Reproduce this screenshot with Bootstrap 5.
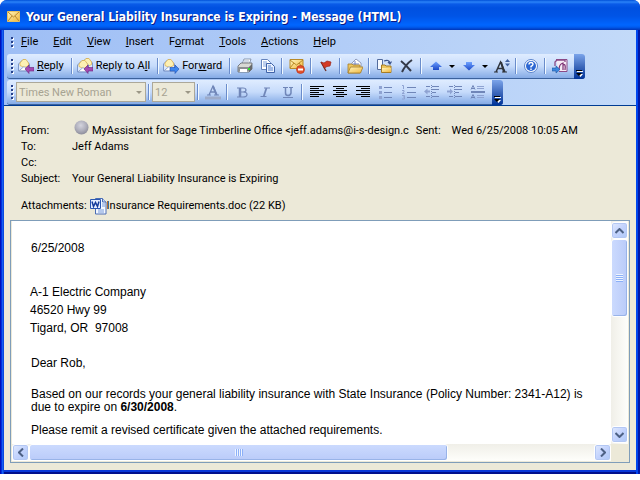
<!DOCTYPE html>
<html lang="en">
<head>
<meta charset="utf-8">
<meta name="viewport" content="width=device-width, initial-scale=1">
<title>Your General Liability Insurance is Expiring - Message (HTML)</title>
<link href="https://cdn.jsdelivr.net/npm/bootstrap@5.3.0/dist/css/bootstrap.min.css" rel="stylesheet">
<style>
  :root { --ui: Roboto, "Noto Sans", sans-serif; }
  body { font-family: var(--ui); font-size: 11px; line-height: 16px; color: #000; background: #fff; }
  button { font: inherit; color: inherit; background: none; border: 0; padding: 0; }
  .win { min-height: calc(100vh - 6px); border-radius: 7px 7px 0 0; overflow: hidden; padding: 0 4px 4px;
    background: linear-gradient(90deg, #0011b8 0 1px, #0030e0 1px 2px, #1660f0 2px 3px, #0a48e0 3px 4px, transparent 4px calc(100% - 4px), #0046ee calc(100% - 4px) calc(100% - 2px), #0018a8 calc(100% - 2px)),
    linear-gradient(0deg, #000f8c 0 2px, #0838d8 2px 4px, #0a48e0 4px); }
  .titlebar { height: 30px; margin: 0 -4px; padding: 3px 7px 0; gap: 6px; color: #fff;
    background: linear-gradient(#0050d8 0, #2b83f8 2px, #0a5be8 4px, #0050e0 8px, #0054e6 16px, #0066ff 25px, #005cf0 27px, #0036b8 30px); }
  .titlebar h1 { font: bold 12px/18px "DejaVu Sans Condensed", "Noto Sans", sans-serif; text-shadow: 1px 1px 0 #0a1883; }
  .bars { background: linear-gradient(90deg, #9ebef5, #c3daf9); border-bottom: 1px solid #003c93; }
  .menubar { height: 24px; padding-left: 3px; }
  .menubar button { line-height: 16px; margin-right: 15px; }
  .grip { width: 9px; height: 15px; flex: none; background: repeating-linear-gradient(#27418b 0 2px, transparent 2px 4px) 4px 0 / 2px 14px no-repeat, repeating-linear-gradient(#fff 0 2px, transparent 2px 4px) 5px 1px / 2px 14px no-repeat; }
  .menubar .grip { height: 11px; margin-right: 5px; background-size: 2px 10px; }
  .tool { height: 25px; margin-left: 3px; border-radius: 3px; border-bottom: 1px solid #3b619c;
    background: linear-gradient(#dfecff, #c6dbfb 50%, #85abe6); width: max-content; }
  .tool + .tool { margin-top: 1px; }
  .tool button { width: 23px; height: 22px; flex: none; display: flex; align-items: center; justify-content: center; }
  .tool button svg { width: 16px; height: 16px; flex: none; }
  .tool .lbl { width: auto; gap: 3px; padding: 0 5px 0 2px; }
  .tool .drop { width: 10px; }
  .tool .more { width: 11px; height: 25px; margin-left: 3px; margin-bottom: -1px; border-radius: 0 3px 3px 0; background: linear-gradient(#7ba4ea, #3d68bb 50%, #003399); align-items: flex-end; padding-bottom: 2px; }
  .tool .more svg { width: 7px; height: 8px; }
  .sep { width: 6px; height: 16px; flex: none; background: linear-gradient(90deg, transparent 2px, #6a8ccb 2px 3px, #f1f9ff 3px 4px, transparent 4px); }
  .tool select { appearance: none; height: 20px; font: 11px var(--ui); color: #a7a392; opacity: 1; border: 1px solid #aca899; padding: 0 2px; border-radius: 0;
    background: #ece9d8; }
  .pick { position: relative; display: flex; }
  .pick::after { content: ""; position: absolute; right: 4px; top: 9px; border: 3px solid transparent; border-top-color: #9b9786; pointer-events: none; }
  .face { width: 130px; } .size { width: 43px; }
  .off { color: #7086b8; }
  .pane { background: #ece9d8; padding: 17px 6px 7px; }
  .heads { padding: 0 11px; }
  .heads dl { display: grid; grid-template-columns: 51px 1fr; }
  .heads dt { font-weight: 400; } .heads dd { margin: 0; white-space: nowrap; }
  .who { gap: 3px; }
  .who svg { margin: -3px 0 0 2px; }
  .when { margin-left: 4px; } .when b { font-weight: 400; margin-right: 11px; }
  .attach { height: 20px; margin-top: 9px; margin-bottom: 4px; gap: 3px; }
  .attach a { color: #000; text-decoration: none; }
  .frame { border: 1px solid #7f9db9; background: #ece9d8; display: grid; grid-template: 1fr 17px / 1fr 17px; padding: 0 1px 1px; }
  .letter { background: #fff; padding: 18px 10px 4px 19px; font: 12px/18px "Liberation Sans", Arial, sans-serif; overflow: hidden; }
  .letter p { margin: 0; }
  .letter .street { margin: 26px 0 17px -1px; }
  .letter .gist { margin: 16px 0 7px; line-height: 13px; }
  .vbar { background: linear-gradient(90deg, #f0efe8, #fefefb); padding: 1px 0; }
  .hbar { background: linear-gradient(#f0efe8, #fefefb); }
  .arrow, .thumb { border: 1px solid #fff !important; border-radius: 3px; background: linear-gradient(135deg, #e1eafe, #c3d3fd 50%, #aec8f7) !important; box-shadow: inset 0 0 0 1px #b3c7f3; display: flex; align-items: center; justify-content: center; color: #4d6185; }
  .arrow { width: 17px; height: 17px; flex: none; }
  .vbar .thumb { height: 78px; background: linear-gradient(90deg, #cbdafe, #bacbf9) !important; box-shadow: inset -1px -1px 0 #98b3e8; }
  .hbar .thumb { width: 70%; background: linear-gradient(#cbdafe, #bacbf9) !important; box-shadow: inset -1px -1px 0 #98b3e8; }
  .ridge { width: 7px; height: 8px; background: repeating-linear-gradient(#eef4fe 0 1px, #8cb0f8 1px 2px); }
  .hbar .ridge { width: 8px; height: 7px; background: repeating-linear-gradient(90deg, #eef4fe 0 1px, #8cb0f8 1px 2px); }
</style>
</head>
<body>
<svg class="position-absolute" width="0" height="0" aria-hidden="true">
  <defs>
    <linearGradient id="gold" x1="0" y1="0" x2="1" y2="1"><stop offset="0" stop-color="#fff6c0"/><stop offset="1" stop-color="#f0b53a"/></linearGradient>
    <linearGradient id="blu" x1="0" y1="0" x2="0" y2="1"><stop offset="0" stop-color="#6fa2ff"/><stop offset="1" stop-color="#1b48c8"/></linearGradient>
    <radialGradient id="orb" cx=".45" cy=".35" r=".65"><stop offset="0" stop-color="#d4d4de"/><stop offset=".6" stop-color="#aeaebb"/><stop offset="1" stop-color="#8d8d9b"/></radialGradient>
  </defs>
  <symbol id="env" viewBox="0 0 16 16"><path d="M.5 6 5 1.500h2L11.500 6v7H.5z" fill="#dce8fb" stroke="#7d98cb"/><path d="M2 5 5 1.500h3L10.500 5v2.500L6.500 9.500 2 7.500z" fill="#fdf0b4" stroke="#e0b040" stroke-width=".7"/><path d="M1 12.800 6 8.500 11 12.800z" fill="#fff" stroke="#7d98cb" stroke-width=".8"/></symbol>
</svg>
<main class="win d-flex flex-column">
  <header class="titlebar d-flex align-items-center">
    <svg width="13" height="11" viewBox="0 0 13 11"><path d="M.5.5h12v10H.5z" fill="url(#gold)" stroke="#e8c060"/><path d="M1 1l5.500 5L12 1M1 10l4-5M12 10 8 5" fill="none" stroke="#b98730"/></svg>
    <h1 class="m-0">Your General Liability Insurance is Expiring - Message (HTML)</h1>
  </header>
  <div class="bars">
    <nav class="menubar d-flex align-items-center" aria-label="Menu">
      <span class="grip"></span>
      <button><u>F</u>ile</button><button><u>E</u>dit</button><button><u>V</u>iew</button><button><u>I</u>nsert</button><button>F<u>o</u>rmat</button><button><u>T</u>ools</button><button><u>A</u>ctions</button><button><u>H</u>elp</button>
    </nav>
    <div class="tool d-flex align-items-center" role="toolbar" aria-label="Standard">
      <span class="grip"></span>
      <button class="lbl"><svg><use href="#env" width="16" height="16"/><path d="m7 11 4-4v2.500h5v3.500h-5v2.500z" fill="#a44ab0" stroke="#6d2480" stroke-width=".6"/></svg><span><u>R</u>eply</span></button><span class="sep"></span>
      <button class="lbl"><svg><use href="#env" x="4" y="-1" width="16" height="16"/><use href="#env" x="0" y="1" width="16" height="16"/><path d="m7 11 4-4v2.500h5v3.500h-5v2.500z" fill="#a44ab0" stroke="#6d2480" stroke-width=".6"/></svg><span>Reply to A<u>l</u>l</span></button><span class="sep"></span>
      <button class="lbl"><svg><use href="#env" width="16" height="16"/><path d="m16 11-4-4v2.500H7v3.500h5v2.500z" fill="#3d86ee" stroke="#1c4cae" stroke-width=".6"/></svg><span>For<u>w</u>ard</span></button><span class="sep"></span>
      <button aria-label="Print"><svg viewBox="0 0 16 16"><path d="M5 6 7 1h7l-2 6z" fill="#fff" stroke="#7585a0" stroke-width=".8"/><path d="M7 3h5M6.500 5h5" stroke="#8fa2bf" stroke-width=".8"/><path d="m1 8 3-3h11v6l-3 3H1z" fill="#d9d9d5" stroke="#626568" stroke-width=".8"/><path d="M1 9h11v4H1z" fill="#8c8f91"/><path d="M3 11h7v3H3z" fill="#fff"/><path d="m12 9 3-3v5l-3 3z" fill="#66696b"/><path d="M11 10h2v2h-2z" fill="#2fe02a"/></svg></button>
      <button aria-label="Copy"><svg viewBox="0 0 16 16"><path d="M1.500 1.500h6l3 3v7h-9z" fill="#fff" stroke="#6583bd"/><path d="M3 4h4M3 6h4M3 8h4" stroke="#7ea0dd"/><path d="M6.500 5.500h5l3 3v6h-8z" fill="#e9f1ff" stroke="#3f62a8"/><path d="M8 8h3M8 10h5M8 12h5" stroke="#5680cc"/></svg></button><span class="sep"></span>
      <button aria-label="Junk"><svg viewBox="0 0 16 16"><path d="M1 1.500h13v9H1z" fill="url(#gold)" stroke="#b98a28"/><path d="m1 2 6.500 5L14 2M1 10l4-5M14 10l-4-5" fill="none" stroke="#b98a28"/><circle cx="11.500" cy="11.500" r="4" fill="#e4512b" stroke="#b8321c" stroke-width=".7"/><path d="M9 10.500h5v2H9z" fill="#fff"/></svg></button><span class="sep"></span>
      <button aria-label="Flag"><svg viewBox="0 0 16 16"><path d="M3 4 8 13" stroke="#6c2b22" stroke-width="1.400"/><path d="m3 4 3 1 3-2 4 1-1 4-3 .5L6.500 10z" fill="#d43a25" stroke="#9a2418" stroke-width=".7"/></svg></button><span class="sep"></span>
      <button aria-label="Open"><svg viewBox="0 0 16 16"><path d="m5 5 4-4 5 4v5H5z" fill="#fff" stroke="#7a86a8" stroke-width=".8"/><path d="M8 3v4m-2-1h6" stroke="#7184c4"/><path d="M1 6h4l1 1h7v8H1z" fill="#edc760" stroke="#a57c26" stroke-width=".8"/><path d="M3.500 9H16l-2.500 6H1z" fill="url(#gold)" stroke="#a57c26" stroke-width=".8"/></svg></button><span class="sep"></span>
      <button aria-label="Move to folder"><svg viewBox="0 0 16 16"><path d="M1.500 1.500h5v10h-5z" fill="#f5f9ff" stroke="#526b9d"/><path d="M8 3q5-2 6 2m-2-1 2 2 1.500-2.500" fill="none" stroke="#3c558e" stroke-width="1.200"/><path d="M5.500 7H9l1 1h5v6.500H5.500z" fill="#edc760" stroke="#a57c26"/><path d="M6 10h9v4H6z" fill="url(#gold)"/></svg></button>
      <button aria-label="Delete"><svg viewBox="0 0 16 16"><path d="M2 3q5 4 10 10M13 2Q7 6 3 14" fill="none" stroke="#343a49" stroke-width="2"/></svg></button><span class="sep"></span>
      <button aria-label="Previous item"><svg viewBox="0 0 16 16"><path d="m8 3.500 6 5.500h-3v3H5V9H2z" fill="url(#blu)"/></svg></button><button class="drop" aria-label="Previous list"><svg viewBox="0 0 16 16"><path d="M5 7h6l-3 3z"/></svg></button>
      <button aria-label="Next item"><svg viewBox="0 0 16 16"><path d="m8 12.500 6-5.500h-3V4H5v3H2z" fill="url(#blu)"/></svg></button><button class="drop" aria-label="Next list"><svg viewBox="0 0 16 16"><path d="M5 7h6l-3 3z"/></svg></button>
      <button aria-label="Font size"><svg viewBox="0 0 16 16"><path d="M2 14 6.500 4 11 14M4 10.500h5" fill="none" stroke="#30343b" stroke-width="1.500"/><path d="m7 4 3 10" stroke="#30343b" stroke-width="2"/><path d="M0 14h4M8 14h5" stroke="#30343b"/><path d="m11 4 2.500-3L16 4zM11 5.500h5L13.500 8.500z" fill="#41619f"/></svg></button><span class="sep"></span>
      <button aria-label="Help"><svg viewBox="0 0 16 16"><circle cx="8" cy="8" r="6.500" fill="#fff" stroke="#5a83cc"/><circle cx="8" cy="8" r="5" fill="#2d67d2"/><path d="M6 6.500Q6 4.500 8 4.500t2 1.800Q10 7.500 8 8.500V9.500M8 10.500V12" fill="none" stroke="#fff" stroke-width="1.400"/></svg></button><span class="sep"></span>
      <button aria-label="Send to OneNote"><svg viewBox="0 0 16 16"><path d="M4 1.500h11v12H7" fill="#f6ebf5" stroke="#8a4a86"/><path d="M3 8V4l2-2h8v2" fill="none" stroke="#8a4a86" stroke-width="1.300"/><path d="M7 12q0-6 4-7v7m0-5q3-2 2 5" fill="none" stroke="#7b2f72" stroke-width="1.200"/><path d="M0 10h4V8l4 3.500L4 15v-2H0z" fill="#3d86de" stroke="#1d559f" stroke-width=".6"/></svg></button>
      <button class="more" aria-label="Toolbar options"><svg viewBox="0 0 7 8"><path d="M1 2h6v1H1zM2 5h5L4.500 8z" fill="#fff"/><path d="M0 1h6v1H0zM0 4h6L3 7z"/></svg></button>
    </div>
    <div class="tool d-flex align-items-center" role="toolbar" aria-label="Formatting">
      <span class="grip"></span>
      <span class="pick"><select class="face" disabled aria-label="Font"><option>Times New Roman</option></select></span><span class="sep"></span>
      <span class="pick"><select class="size" disabled aria-label="Size"><option>12</option></select></span><span class="sep"></span>
      <button class="off" aria-label="Font color"><svg viewBox="0 0 16 16"><path d="M4 11 8 2l4 9M5 8h5" fill="none" stroke="currentColor" stroke-width="1.300"/><path d="m8 2 3.500 9" stroke="currentColor" stroke-width="2"/><path d="M2 11h4M9 11h5" stroke="currentColor"/><path d="M0 12.500h16v3H0z" fill="#9dabc9"/></svg></button><span class="sep"></span>
      <button class="off" aria-label="Bold"><svg viewBox="0 0 16 16"><path d="M3 4h6q3 0 3 2t-3 2q4 0 4 2.500T9 13H3M9 8H6" fill="none" stroke="currentColor" stroke-width="1.200"/><path d="M6 4v9" stroke="currentColor" stroke-width="2.500"/></svg></button>
      <button class="off" aria-label="Italic"><svg viewBox="0 0 16 16"><path d="m9.500 4-3 9" stroke="currentColor" stroke-width="1.800"/><path d="M7 4h6M3.500 12.500h6" stroke="currentColor"/></svg></button>
      <button class="off" aria-label="Underline"><svg viewBox="0 0 16 16"><path d="M5.500 4v5q0 2.500 2.500 2.500T11 9V4" fill="none" stroke="currentColor" stroke-width="1.500"/><path d="M3 3.500h5M9 3.500h4M3 13.500h10" stroke="currentColor"/></svg></button><span class="sep"></span>
      <button aria-label="Align left"><svg viewBox="0 0 16 16"><path d="M1 2.500h14M1 4.500h9M1 6.500h14M1 8.500h9M1 10.500h14M1 12.500h9" stroke="#000"/></svg></button>
      <button aria-label="Center"><svg viewBox="0 0 16 16"><path d="M1 2.500h14M4 4.500h8M1 6.500h14M4 8.500h8M1 10.500h14M4 12.500h8" stroke="#000"/></svg></button>
      <button aria-label="Align right"><svg viewBox="0 0 16 16"><path d="M1 2.500h14M6 4.500h9M1 6.500h14M6 8.500h9M1 10.500h14M6 12.500h9" stroke="#000"/></svg></button>
      <button class="off" aria-label="Bullets"><svg viewBox="0 0 16 16"><path d="M6 3.500h8M6 8.500h8M6 13.500h8" stroke="currentColor"/><path d="M1 2h3v3H1zM1 7h3v3H1zM1 12h3v3H1z" fill="#8fa3d2"/></svg></button>
      <button class="off" aria-label="Numbering"><svg viewBox="0 0 16 16"><path d="M6 3.500h9M6 8.500h9M6 13.500h9" stroke="currentColor"/><path d="M1 1.500h1.500V5M1 6.500h2v1.500L1 9.500h2.500M1 11.500h2.500v3.500H1m1-2h1" fill="none" stroke="#8fa3d2"/></svg></button>
      <button class="off" aria-label="Decrease indent"><svg viewBox="0 0 16 16"><path d="M2 2.500h4m2 0h7M8 5.500h7M8 8.500h4M2 12.500h4m2 0h7" stroke="currentColor" stroke-width="1.200"/><path d="M7.500 1v14" stroke="currentColor" stroke-dasharray="1 1"/><path d="m0 7.500 3.500-3v2H6v2H3.500v2z" fill="#8fa3d2"/></svg></button>
      <button class="off" aria-label="Increase indent"><svg viewBox="0 0 16 16"><path d="M2 2.500h4m2 0h7M8 5.500h7M8 8.500h4M2 12.500h4m2 0h7" stroke="currentColor" stroke-width="1.200"/><path d="M7.500 1v14" stroke="currentColor" stroke-dasharray="1 1"/><path d="M6 7.500 3 4.500v2H0v2h3v2z" fill="#8fa3d2"/></svg></button>
      <button class="off" aria-label="Horizontal line"><svg viewBox="0 0 16 16"><path d="M7 2.500h7M7 4.500h7M7 11.500h7M7 13.500h7" stroke="#8fa3d2"/><path d="M1 8h14" stroke="currentColor" stroke-width="2"/><path d="m1 5.500 2-4 2 4m-3-1h2M1 14.500l2-4 2 4m-3-1h2" fill="none" stroke="currentColor"/></svg></button>
      <button class="more" aria-label="Toolbar options"><svg viewBox="0 0 7 8"><path d="M1 2h6v1H1zM2 5h5L4.500 8z" fill="#fff"/><path d="M0 1h6v1H0zM0 4h6L3 7z"/></svg></button>
    </div>
  </div>
  <div class="pane flex-grow-1 d-flex flex-column">
    <section class="heads">
      <dl class="m-0">
        <dt>From:</dt><dd class="who d-flex"><svg width="15" height="15" viewBox="0 0 15 15"><circle cx="7.500" cy="7.500" r="7" fill="url(#orb)"/></svg><span>MyAssistant for Sage Timberline Office &lt;jeff.adams@i-s-design.c</span><span class="when"><b>Sent:</b>Wed 6/25/2008 10:05 AM</span></dd>
        <dt>To:</dt><dd>Jeff Adams</dd>
        <dt>Cc:</dt><dd></dd>
        <dt>Subject:</dt><dd>Your General Liability Insurance is Expiring</dd>
      </dl>
      <div class="attach d-flex align-items-center"><span>Attachments:</span><a class="d-flex align-items-center" href="#"><svg width="17" height="17" viewBox="0 0 17 17"><path d="M5.500.5h7l3.500 3.500v12H5.500z" fill="#f4f8ff" stroke="#4a6db4"/><path d="M12.500.5V4H16" fill="#c5d6f5" stroke="#4a6db4"/><path d="M12 6h3M12 8h3M8 12h6M8 14h6" stroke="#7598da"/><path d="M.5 1.500h10v9H.5z" fill="#e6efff" stroke="#2a57b2"/><path d="m2 3.500 1.500 5 2-4 2 4 1.500-5" fill="none" stroke="#153c9b" stroke-width="1.500"/></svg><span>Insurance Requirements.doc (22 KB)</span></a></div>
    </section>
    <section class="frame flex-grow-1">
      <article class="letter">
        <p>6/25/2008</p>
        <p class="street">A-1 Electric Company<br>46520 Hwy 99<br>Tigard, OR&nbsp; 97008</p>
        <p>Dear Rob,</p>
        <p class="gist">Based on our records your general liability insurance with State Insurance (Policy Number: 2341-A12) is due to expire on <strong>6/30/2008</strong>.</p>
        <p>Please remit a revised certificate given the attached requirements.</p>
      </article>
      <div class="vbar d-flex flex-column">
        <button class="arrow" aria-label="Scroll up"><svg width="9" height="6" viewBox="0 0 9 6"><path d="m.5 5 4-4 4 4" fill="none" stroke="currentColor" stroke-width="2"/></svg></button>
        <div class="thumb"><span class="ridge"></span></div>
        <button class="arrow mt-auto" aria-label="Scroll down"><svg width="9" height="6" viewBox="0 0 9 6"><path d="m.5 1 4 4 4-4" fill="none" stroke="currentColor" stroke-width="2"/></svg></button>
      </div>
      <div class="hbar d-flex">
        <button class="arrow" aria-label="Scroll left"><svg width="6" height="9" viewBox="0 0 6 9"><path d="m5 .5-4 4 4 4" fill="none" stroke="currentColor" stroke-width="2"/></svg></button>
        <div class="thumb"><span class="ridge"></span></div>
        <button class="arrow ms-auto" aria-label="Scroll right"><svg width="6" height="9" viewBox="0 0 6 9"><path d="m1 .5 4 4-4 4" fill="none" stroke="currentColor" stroke-width="2"/></svg></button>
      </div>
    </section>
  </div>
</main>
<script src="https://cdn.jsdelivr.net/npm/bootstrap@5.3.0/dist/js/bootstrap.bundle.min.js"></script>
</body>
</html>
